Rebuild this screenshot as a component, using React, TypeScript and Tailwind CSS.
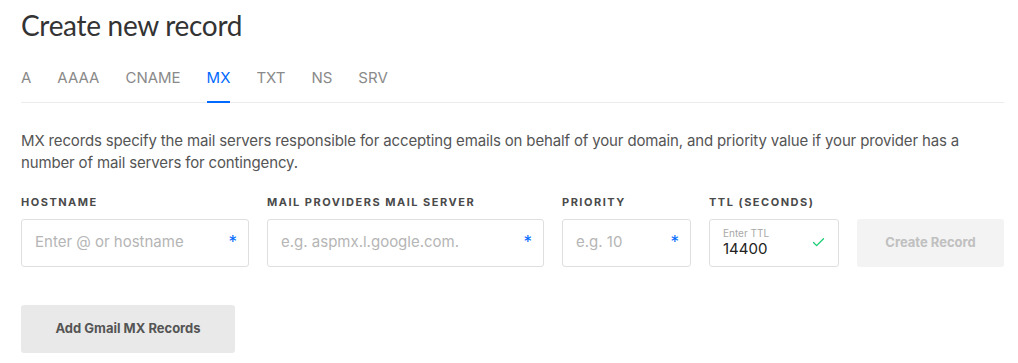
import { Check } from "lucide-react";

const tabs = ["A", "AAAA", "CNAME", "MX", "TXT", "NS", "SRV"] as const;

function Asterisk() {
  return (
    <span className="ml-2 text-[17px] leading-none text-[#0069ff]" aria-hidden="true">
      *
    </span>
  );
}

function FieldLabel({ children }: { children: string }) {
  return (
    <label className="mb-[8px] text-[11px] font-bold uppercase tracking-[1.5px] text-[#4a4a4a]">
      {children}
    </label>
  );
}

function Field({
  label,
  placeholder,
  width,
}: {
  label: string;
  placeholder: string;
  width: string;
}) {
  return (
    <div className={`flex shrink-0 flex-col ${width}`}>
      <FieldLabel>{label}</FieldLabel>
      <div className="flex h-[48px] items-center justify-between rounded-[3px] border border-[#dfdfdf] bg-white pl-[13px] pr-[11px]">
        <span className="text-[15px] text-[#b5b5b5]">{placeholder}</span>
        <Asterisk />
      </div>
    </div>
  );
}

export default function App() {
  return (
    <div
      className="h-[363px] w-[1018px] bg-white pl-[21px] pr-[14px] pt-[8px] text-[#333333]"
      style={{ fontFamily: "Inter, 'Liberation Sans', sans-serif" }}
    >
      <h1
        className="text-[28px] font-normal leading-[34px] tracking-[-0.3px] text-[#333333]"
        style={{ fontFamily: "Lato, Inter, sans-serif" }}
      >
        Create new record
      </h1>

      <nav className="mt-[26px] flex w-[983px] gap-[26px] border-b border-[#ececec]">
        {tabs.map((tab) => (
          <span
            key={tab}
            className={
              tab === "MX"
                ? "-mb-px border-b-2 border-[#0069ff] pb-[13px] text-[15px] leading-[20px] text-[#0069ff]"
                : "pb-[14px] text-[15px] leading-[20px] text-[#8a8a8a]"
            }
          >
            {tab}
          </span>
        ))}
      </nav>

      <p className="mt-[27px] w-[960px] text-[15px] leading-[22px] tracking-[-0.15px] text-[#555555]">
        MX records specify the mail servers responsible for accepting emails on behalf of your
        domain, and priority value if your provider has a number of mail servers for contingency.
      </p>

      <div className="mt-[20px] flex w-[983px] items-end gap-[18px]">
        <Field label="Hostname" placeholder="Enter @ or hostname" width="w-[228px]" />
        <Field
          label="Mail providers mail server"
          placeholder="e.g. aspmx.l.google.com."
          width="w-[277px]"
        />
        <Field label="Priority" placeholder="e.g. 10" width="w-[129px]" />
        <div className="flex w-[130px] shrink-0 flex-col">
          <FieldLabel>TTL (seconds)</FieldLabel>
          <div className="flex h-[48px] items-center justify-between rounded-[3px] border border-[#dfdfdf] bg-white pl-[13px] pr-[12px]">
            <div className="flex flex-col">
              <span className="text-[10px] leading-[12px] text-[#a8a8a8]">Enter TTL</span>
              <span className="text-[15px] leading-[20px] text-[#222222]">14400</span>
            </div>
            <Check className="h-[15px] w-[15px] text-[#15cd72]" strokeWidth={2} />
          </div>
        </div>
        <button className="h-[48px] w-[147px] shrink-0 rounded-[3px] bg-[#f3f3f3] text-[13px] font-bold text-[#c0c0c0]">
          Create Record
        </button>
      </div>

      <button className="mt-[38px] h-[48px] w-[214px] rounded-[3px] bg-[#e9e9e9] text-[13px] font-bold text-[#555555]">
        Add Gmail MX Records
      </button>
    </div>
  );
}
